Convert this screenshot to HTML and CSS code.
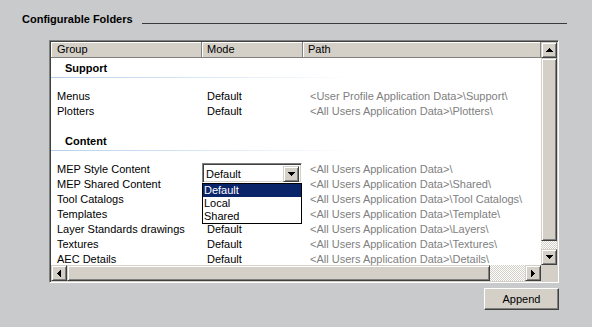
FILE: index.html
```html
<!DOCTYPE html>
<html lang="en">
<head>
    <meta charset="UTF-8">
    <meta name="viewport" content="width=device-width, initial-scale=1.0">
    <title>Configurable Folders</title>
    <link rel="stylesheet" href="styles.css">
</head>
<body>
    <div class="panel">
        <div class="legend">
            <span>Configurable Folders</span>
            <span class="rule"></span>
        </div>

        <div class="listbox">
            <div class="viewport">
                <div class="header">
                    <div class="hcell">Group</div>
                    <div class="hcell">Mode</div>
                    <div class="hcell">Path</div>
                </div>

                <div class="group">Support</div>
                <div class="row"><span>Menus</span><span class="mode">Default</span><span class="path">&lt;User Profile Application Data&gt;\Support\</span></div>
                <div class="row"><span>Plotters</span><span class="mode">Default</span><span class="path">&lt;All Users Application Data&gt;\Plotters\</span></div>

                <div class="group next">Content</div>
                <div class="row">
                    <span>MEP Style Content</span>
                    <span class="mode editing">
                        <div class="combo">
                            <span class="combo-text">Default</span>
                            <span class="sbtn combo-btn">
                                <svg width="7" height="4" viewBox="0 0 7 4" shape-rendering="crispEdges"><path d="M0 0h7v1h-1v1h-1v1h-1v1h-1v-1h-1v-1h-1v-1h-1z"/></svg>
                            </span>
                            <ul class="dropdown">
                                <li class="selected">Default</li>
                                <li>Local</li>
                                <li>Shared</li>
                            </ul>
                        </div>
                    </span>
                    <span class="path">&lt;All Users Application Data&gt;\</span>
                </div>
                <!-- mode cells under the open list are hidden by it -->
                <div class="row"><span>MEP Shared Content</span><span class="mode"></span><span class="path">&lt;All Users Application Data&gt;\Shared\</span></div>
                <div class="row"><span>Tool Catalogs</span><span class="mode"></span><span class="path">&lt;All Users Application Data&gt;\Tool Catalogs\</span></div>
                <div class="row"><span>Templates</span><span class="mode"></span><span class="path">&lt;All Users Application Data&gt;\Template\</span></div>
                <div class="row"><span>Layer Standards drawings</span><span class="mode">Default</span><span class="path">&lt;All Users Application Data&gt;\Layers\</span></div>
                <div class="row"><span>Textures</span><span class="mode">Default</span><span class="path">&lt;All Users Application Data&gt;\Textures\</span></div>
                <div class="row"><span>AEC Details</span><span class="mode">Default</span><span class="path">&lt;All Users Application Data&gt;\Details\</span></div>
            </div>

            <div class="vscroll">
                <span class="sbtn">
                    <svg width="7" height="4" viewBox="0 0 7 4" shape-rendering="crispEdges"><path d="M3 0h1v1h1v1h1v1h1v1h-7v-1h1v-1h1v-1h1z"/></svg>
                </span>
                <span class="thumb v"></span>
                <span class="track"></span>
                <span class="sbtn">
                    <svg width="7" height="4" viewBox="0 0 7 4" shape-rendering="crispEdges"><path d="M0 0h7v1h-1v1h-1v1h-1v1h-1v-1h-1v-1h-1v-1h-1z"/></svg>
                </span>
            </div>

            <div class="hscroll">
                <span class="sbtn">
                    <svg width="4" height="7" viewBox="0 0 4 7" shape-rendering="crispEdges"><path d="M3 0h1v7h-1v-1h-1v-1h-1v-1h-1v-1h1v-1h1v-1h1z"/></svg>
                </span>
                <span class="thumb h"></span>
                <span class="track"></span>
                <span class="sbtn">
                    <svg width="4" height="7" viewBox="0 0 4 7" shape-rendering="crispEdges"><path d="M0 0h1v1h1v1h1v1h1v1h-1v1h-1v1h-1v1h-1z"/></svg>
                </span>
            </div>

            <div class="corner"></div>
        </div>

        <div class="actions">
            <button class="button">Append</button>
        </div>
    </div>
</body>
</html>
```

FILE: styles.css
```css
* {
    box-sizing: border-box;
}
body {
    margin: 0;
    background-color: #c9cacc;
    font-family: "Liberation Sans", Arial, sans-serif;
    font-size: 11px;
    color: #000;
}
.panel {
    padding: 12px 25px 0 22px;
}
.legend {
    display: flex;
    height: 15px;
    line-height: 15px;
    font-weight: bold;
}
.rule {
    flex: 1;
    align-self: flex-end;
    margin: 0 0 3px 9px;
    border-top: 1px solid #3a3a3a;
}

/* list view */
.listbox {
    display: grid;
    grid-template-columns: 1fr 16px;
    grid-template-rows: 1fr 16px;
    width: 510px;
    height: 243px;
    margin: 13px 0 0 27px;
    padding: 1px;
    border: 1px solid;
    border-color: #808080 #fff #fff #808080;
    box-shadow: inset 1px 1px #404040, inset -1px -1px #d4d0c8;
}
.viewport {
    background: #fff;
    overflow: hidden;
}
.header {
    display: grid;
    grid-template-columns: 151px 101px 1fr;
    height: 16px;
    background: #d4d0c8;
    border-bottom: 1px solid #808080;
}
.hcell {
    line-height: 15px;
    padding-left: 5px;
    border-right: 1px solid #808080;
    box-shadow: inset 1px 1px #fff;
}
.hcell:first-child {
    padding-left: 6px;
}
.group {
    padding: 3px 0 2px 14px;
    margin-bottom: 11px;
    line-height: 15px;
    font-weight: bold;
    background: linear-gradient(to right, #b5cfea, #fff 300px) left bottom / 100% 1px no-repeat;
}
.group.next {
    margin-top: 12px;
}
.row {
    display: grid;
    grid-template-columns: 151px 101px 1fr;
    line-height: 15px;
    white-space: nowrap;
}
.row > span {
    padding-left: 6px;
}
.row > .mode {
    padding-left: 5px;
}
.row > .path {
    padding-left: 7px;
    color: #808080;
}
.mode.editing {
    position: relative;
    padding: 0;
}

/* combo box being edited */
.combo {
    position: absolute;
    top: 1px;
    left: 0;
    width: 100px;
    height: 20px;
    display: flex;
    padding: 2px;
    background: #fff;
    border: 1px solid;
    border-color: #808080 #fff #fff #808080;
    box-shadow: inset 1px 1px #404040, inset -1px -1px #d4d0c8;
}
.combo-text {
    flex: 1;
    line-height: 16px;
    padding-left: 1px;
    color: #000;
}
.combo-btn {
    width: 15px;
    height: 16px;
}
.dropdown {
    position: absolute;
    top: 19px;
    left: -1px;
    width: 100px;
    margin: 0;
    padding: 0;
    list-style: none;
    background: #fff;
    border: 1px solid #000;
    z-index: 2;
}
.dropdown li {
    line-height: 13px;
    padding-left: 1px;
}
.dropdown li.selected {
    background: #0a246a;
    color: #fff;
}

/* scroll bars */
.vscroll,
.hscroll {
    display: flex;
}
.vscroll {
    flex-direction: column;
}
.sbtn,
.thumb {
    display: flex;
    align-items: center;
    justify-content: center;
    flex: none;
    width: 16px;
    height: 16px;
    background: #d4d0c8;
    border: 1px solid;
    border-color: #d4d0c8 #404040 #404040 #d4d0c8;
    box-shadow: inset 1px 1px #fff, inset -1px -1px #808080;
}
.thumb.v {
    height: 183px;
}
.thumb.h {
    width: 423px;
}
.track {
    flex: 1;
    background: repeating-conic-gradient(#d4d0c8 0 25%, #fff 0 50%) 0 0 / 2px 2px;
}
.corner {
    background: #d4d0c8;
}

.actions {
    display: flex;
    justify-content: flex-end;
    width: 537px;
    margin-top: 5px;
}
.button {
    width: 75px;
    height: 22px;
    padding: 0;
    font-family: inherit;
    font-size: 11px;
    color: #000;
    background: #d4d0c8;
    border: 1px solid;
    border-color: #fff #404040 #404040 #fff;
    box-shadow: inset -1px -1px #808080;
}
```
